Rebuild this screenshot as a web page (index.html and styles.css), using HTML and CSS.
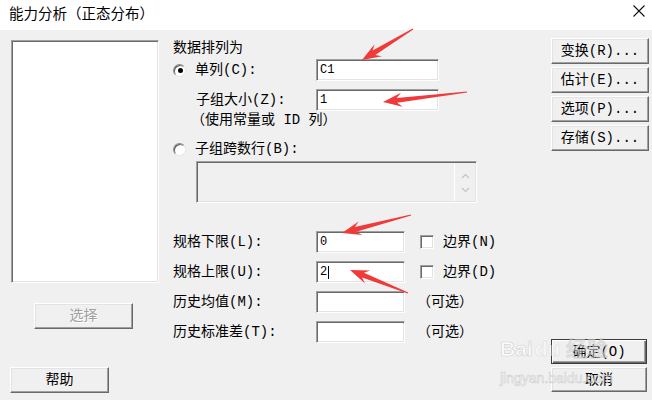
FILE: index.html
```html
<!DOCTYPE html>
<html lang="zh-CN">
<head>
<meta charset="utf-8">
<title>能力分析（正态分布）</title>
<link rel="stylesheet" href="styles.css">
</head>
<body>
<div class="window">
  <div class="titlebar">
    <span class="title">能力分析（正态分布）</span>
    <svg class="close" width="12" height="12" viewBox="0 0 12 12"><path d="M0.5 0.5 L11.5 11.5 M11.5 0.5 L0.5 11.5" stroke="#111" stroke-width="1.1" fill="none"/></svg>
  </div>
  <div class="body">
    <div class="col-left">
      <div class="listbox sunken"></div>
      <div class="btn btn-select disabled">选择</div>
      <div class="btn btn-help">帮助</div>
    </div>
    <div class="col-mid">
      <div class="group-title">数据排列为</div>
      <div class="row r1">
        <span class="radio checked"></span>
        <span class="lbl lbl-radio">单列(C):</span>
        <div class="field sunken wide">C1</div>
      </div>
      <div class="row r2">
        <span class="lbl lbl-sub">子组大小(Z):</span>
        <div class="field sunken wide">1</div>
      </div>
      <div class="note">（使用常量或 ID 列）</div>
      <div class="row r3">
        <span class="radio"></span>
        <span class="lbl">子组跨数行(B):</span>
      </div>
      <div class="textarea sunken">
        <div class="scroll">
          <svg width="9" height="6" viewBox="0 0 9 6"><path d="M1 5 L4.5 1.5 L8 5" stroke="#c4c4c4" stroke-width="1.2" fill="none"/></svg>
          <svg width="9" height="6" viewBox="0 0 9 6"><path d="M1 1 L4.5 4.5 L8 1" stroke="#c4c4c4" stroke-width="1.2" fill="none"/></svg>
        </div>
      </div>
      <div class="row spec first">
        <span class="lbl lbl-spec">规格下限(L):</span>
        <div class="field sunken narrow">0</div>
        <span class="check sunken"></span>
        <span class="check-lbl">边界(N)</span>
      </div>
      <div class="row spec">
        <span class="lbl lbl-spec">规格上限(U):</span>
        <div class="field sunken narrow">2<span class="caret"></span></div>
        <span class="check sunken"></span>
        <span class="check-lbl">边界(D)</span>
      </div>
      <div class="row spec">
        <span class="lbl lbl-spec">历史均值(M):</span>
        <div class="field sunken narrow"></div>
        <span class="opt">（可选）</span>
      </div>
      <div class="row spec">
        <span class="lbl lbl-spec">历史标准差(T):</span>
        <div class="field sunken narrow"></div>
        <span class="opt">（可选）</span>
      </div>
    </div>
    <div class="col-right">
      <div class="stack">
        <div class="btn btn-side">变换(R)...</div>
        <div class="btn btn-side">估计(E)...</div>
        <div class="btn btn-side">选项(P)...</div>
        <div class="btn btn-side">存储(S)...</div>
      </div>
      <div class="stack">
        <div class="btn btn-bottom default">确定(O)</div>
        <div class="btn btn-bottom">取消</div>
      </div>
    </div>
  </div>

  <div class="watermark">
    <span class="wm-big">Bai<span class="wm-faint">du 经验</span></span>
    <span class="wm-small">jingyan.baidu.com</span>
  </div>

  <svg class="arrows" width="652" height="400" viewBox="0 0 652 400">
    <g fill="#f03a3a">
      <g transform="translate(413 29) rotate(148.7)"><polygon points="0,-0.5 45.7,-2.5 40.7,-7 59.7,0 40.7,7 45.7,2.5 0,0.5"/></g>
      <g transform="translate(467 92) rotate(173.2)"><polygon points="0,-0.5 70.6,-2.5 65.6,-7 84.6,0 65.6,7 70.6,2.5 0,0.5"/></g>
      <g transform="translate(411 215) rotate(165.4)"><polygon points="0,-0.5 57.3,-2.5 52.3,-7 71.3,0 52.3,7 57.3,2.5 0,0.5"/></g>
      <g transform="translate(408 293) rotate(-158.4)"><polygon points="0,-0.5 48.4,-2.5 43.4,-7 62.4,0 43.4,7 48.4,2.5 0,0.5"/></g>
    </g>
  </svg>
</div>
</body>
</html>
```
FILE: styles.css
```css
html, body {
  margin: 0;
  padding: 0;
  background: #f0f0f0;
}

.window {
  position: relative;
  width: 652px;
  height: 400px;
  overflow: hidden;
  font-family: "Liberation Mono", "Noto Sans CJK SC", monospace;
  font-size: 14px;
  color: #000;
}

.titlebar {
  height: 30px;
  background: #fff;
  display: flex;
  align-items: flex-start;
  justify-content: space-between;
  padding: 0 7px 0 9px;
  box-sizing: border-box;
}

.title {
  font-family: "Noto Sans CJK SC", sans-serif;
  font-size: 14.5px;
  line-height: 17px;
  margin-top: 4px;
  color: #000;
}

.close {
  margin-top: 5px;
}

.body {
  display: flex;
  height: 370px;
  background: #f0f0f0;
}

.sunken {
  box-sizing: border-box;
  border: 1px solid;
  border-color: #a0a0a0 #fff #fff #a0a0a0;
  box-shadow: inset 1px 1px #696969, inset -1px -1px #e3e3e3;
}

/* left column */
.col-left {
  width: 160px;
  flex: none;
  display: flex;
  flex-direction: column;
  align-items: flex-start;
}

.listbox {
  margin: 10px 0 0 11px;
  width: 148px;
  height: 243px;
  background: #fff;
}

.btn {
  box-sizing: border-box;
  display: flex;
  align-items: center;
  justify-content: center;
  background: #f0f0f0;
  border: 1px solid;
  border-color: #fff #696969 #696969 #fff;
  box-shadow: inset -1px -1px #a0a0a0, inset 1px 1px #e3e3e3;
  line-height: 16px;
  white-space: nowrap;
}

.btn-select {
  margin: 20px 0 0 34px;
  width: 99px;
  height: 26px;
  color: #a0a0a0;
  text-shadow: 1px 1px #fff;
}

.btn-help {
  margin: 38px 0 0 10px;
  width: 99px;
  height: 26px;
}

/* middle column */
.col-mid {
  width: 391px;
  flex: none;
  box-sizing: border-box;
  padding: 10px 0 0 13px;
  display: flex;
  flex-direction: column;
  align-items: flex-start;
}

.group-title {
  height: 16px;
  line-height: 16px;
}

.row {
  display: flex;
  align-items: center;
  height: 22px;
  line-height: 16px;
}

.r1 { margin-top: 3px; }

.r2 {
  margin-top: 8px;
  padding-left: 23px;
}

.r3 {
  margin-top: 14px;
  height: 16px;
}

.radio {
  flex: none;
  box-sizing: border-box;
  width: 13px;
  height: 13px;
  border-radius: 50%;
  background: #fff;
  border: 1px solid;
  border-color: #8a8a8a #e6e6e6 #e6e6e6 #8a8a8a;
  box-shadow: inset 1px 1px #5a5a5a;
  margin-right: 9px;
  display: flex;
  align-items: center;
  justify-content: center;
}

.radio.checked::after {
  content: "";
  width: 5px;
  height: 5px;
  border-radius: 50%;
  background: #000;
  margin: 1px 0 0 1px;
}

.lbl { flex: none; white-space: nowrap; }
.lbl-radio { width: 121px; }
.lbl-sub { width: 120px; }
.lbl-spec { width: 143px; }

.field {
  flex: none;
  height: 22px;
  background: #fff;
  display: flex;
  align-items: center;
  padding: 0 0 0 3px;
  font-family: "Liberation Mono", monospace;
  font-size: 12px;
  line-height: 14px;
}

.field.wide { width: 123px; }
.field.narrow { width: 89px; }

.caret {
  display: inline-block;
  width: 1px;
  height: 13px;
  background: #000;
  margin-left: 1px;
}

.note {
  height: 14px;
  line-height: 14px;
  padding: 2px 0 0 18px;
  white-space: nowrap;
}

.textarea {
  margin: 4px 0 0 23px;
  width: 281px;
  height: 42px;
  background: #f0f0f0;
  display: flex;
  justify-content: flex-end;
}

.scroll {
  width: 21px;
  margin: 1px 1px 1px 0;
  border-left: 1px solid #fff;
  display: flex;
  flex-direction: column;
  align-items: center;
  justify-content: space-between;
  padding: 10px 0 8px;
  box-sizing: border-box;
}

.spec { margin-top: 8px; }
.spec.first { margin-top: 28px; }

.check {
  flex: none;
  width: 14px;
  height: 14px;
  background: #fff;
  margin-left: 15px;
}

.check-lbl {
  margin-left: 9px;
  white-space: nowrap;
}

.opt {
  margin-left: 12px;
  white-space: nowrap;
}

/* right column */
.col-right {
  flex: 1;
  display: flex;
  flex-direction: column;
  justify-content: space-between;
  align-items: flex-start;
  padding: 8px 0 8px;
}

.stack {
  display: flex;
  flex-direction: column;
  gap: 3px;
}

.btn-side {
  width: 98px;
  height: 26px;
}

.btn-bottom {
  width: 96px;
  height: 25px;
}

.btn.default {
  border-color: #3c3c3c;
  box-shadow: inset 1px 1px #fff, inset -1px -1px #696969, inset -2px -2px #a0a0a0;
}

/* overlays */
.watermark {
  position: absolute;
  left: 500px;
  top: 337px;
  display: flex;
  flex-direction: column;
  pointer-events: none;
  color: rgba(255, 255, 255, 0.7);
  -webkit-text-stroke: 0.6px rgba(170, 170, 170, 0.55);
  font-family: "Liberation Sans", sans-serif;
}

.wm-big {
  font-size: 21px;
  font-weight: bold;
  line-height: 24px;
  white-space: nowrap;
}

.wm-faint {
  margin-left: 2px;
  color: rgba(255, 255, 255, 0.45);
  -webkit-text-stroke: 0.5px rgba(170, 170, 170, 0.35);
}

.wm-small {
  font-size: 14px;
  line-height: 18px;
  margin-top: 8px;
  white-space: nowrap;
}

.arrows {
  position: absolute;
  left: 0;
  top: 0;
  pointer-events: none;
}
```
